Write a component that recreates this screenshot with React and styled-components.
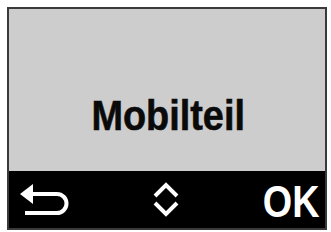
import React from 'react'
import styled, { createGlobalStyle } from 'styled-components'

const GlobalStyle = createGlobalStyle`
  * {
    margin: 0;
    padding: 0;
    box-sizing: border-box;
  }
  body {
    background: #fff;
    font-family: "Liberation Sans", Arial, sans-serif;
  }
`

const Frame = styled.div`
  margin: 7px 0 0 7px;
  width: 320px;
  height: 223px;
  border: 2px solid #3a3a3a;
  display: flex;
  flex-direction: column;
  background: #000;
`

const Display = styled.div`
  flex: 1;
  background: #cdcdcd;
  display: flex;
  justify-content: center;
  align-items: flex-start;
  padding-top: 85px;
`

const Title = styled.h1`
  font-size: 43px;
  font-weight: 700;
  line-height: 1;
  color: #0a0a0a;
  letter-spacing: 0;
  transform: scaleX(0.88);
  margin-left: 2px;
  -webkit-text-stroke: 0.6px #0a0a0a;
`

const SoftKeys = styled.div`
  height: 57px;
  display: grid;
  grid-template-columns: 1fr 1fr 1fr;
  align-items: center;
  padding: 0 6px 0 9px;
`

const Key = styled.div`
  display: flex;
  justify-content: ${p => p.$align};
  align-items: center;
  color: #fff;
`

const OkLabel = styled.span`
  font-size: 45px;
  font-weight: 700;
  line-height: 1;
  transform: scaleX(0.84);
  transform-origin: right center;
  margin-top: 3px;
`

const BackIcon = () => (
  <svg width="54" height="36" viewBox="0 0 54 36">
    <polygon points="2,12 15,2 15,22" fill="#fff" />
    <path
      d="M14 12 H39 A9.5 9.5 0 0 1 39 31 H7"
      fill="none"
      stroke="#fff"
      strokeWidth="4"
    />
  </svg>
)

const UpDownIcon = () => (
  <svg width="30" height="36" viewBox="0 0 30 36" style={{ marginLeft: -4 }}>
    <polyline points="4,14 15,3 26,14" fill="none" stroke="#fff" strokeWidth="4" />
    <polyline points="4,21 15,32 26,21" fill="none" stroke="#fff" strokeWidth="4" />
  </svg>
)

export default function App() {
  return (
    <>
      <GlobalStyle />
      <Frame>
        <Display>
          <Title>Mobilteil</Title>
        </Display>
        <SoftKeys>
          <Key $align="flex-start">
            <BackIcon />
          </Key>
          <Key $align="center">
            <UpDownIcon />
          </Key>
          <Key $align="flex-end">
            <OkLabel>OK</OkLabel>
          </Key>
        </SoftKeys>
      </Frame>
    </>
  )
}
